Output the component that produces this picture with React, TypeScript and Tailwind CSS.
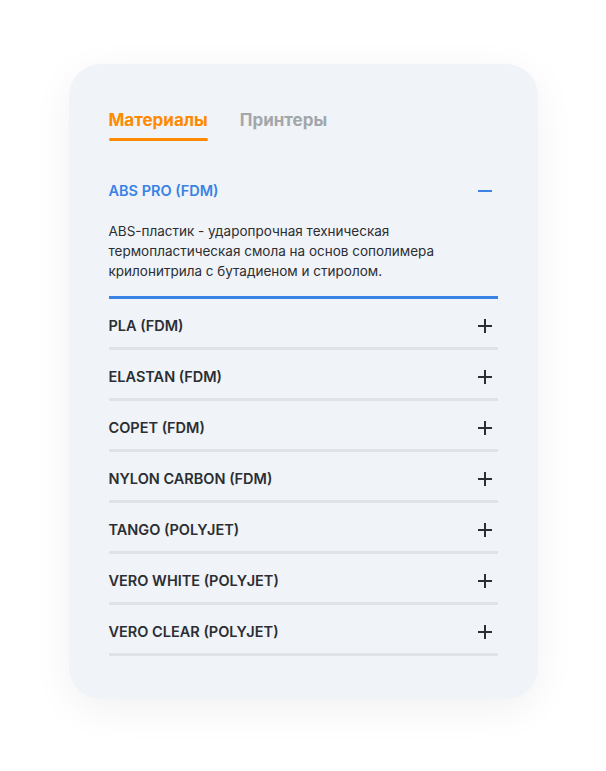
import { useState } from 'react'

const items = [
  {
    title: 'ABS PRO (FDM)',
    lines: [
      'ABS-пластик - ударопрочная техническая',
      'термопластическая смола на основ сополимера',
      'крилонитрила с бутадиеном и стиролом.',
    ],
  },
  { title: 'PLA (FDM)' },
  { title: 'ELASTAN (FDM)' },
  { title: 'COPET (FDM)' },
  { title: 'NYLON CARBON (FDM)' },
  { title: 'TANGO (POLYJET)' },
  { title: 'VERO WHITE (POLYJET)' },
  { title: 'VERO CLEAR (POLYJET)' },
]

function Plus() {
  return (
    <svg width="14" height="14" viewBox="0 0 14 14" className="text-[#2b2e33]">
      <path d="M7 0v14M0 7h14" stroke="currentColor" strokeWidth="2" />
    </svg>
  )
}

function Minus() {
  return (
    <svg width="14" height="14" viewBox="0 0 14 14" className="text-[#3a82e6]">
      <path d="M0 7h14" stroke="currentColor" strokeWidth="2" />
    </svg>
  )
}

export default function App() {
  const [tab, setTab] = useState(0)
  const [open, setOpen] = useState(0)

  return (
    <main className="flex min-h-screen w-full items-start justify-center bg-white pt-16 font-['Inter',sans-serif]">
      <div className="w-[469px] rounded-[32px] bg-[#f0f3f7] px-10 pt-11 pb-[43px] shadow-[0_10px_40px_rgba(0,0,0,0.06)]">
        <div className="flex gap-8">
          {['Материалы', 'Принтеры'].map((t, i) => (
            <button
              key={t}
              onClick={() => setTab(i)}
              className={`flex flex-col text-[17px] font-bold leading-6 ${
                i === tab ? 'text-[#ff8a00]' : 'text-[#a3a6aa]'
              }`}
            >
              {t}
              <span
                className={`mt-1.5 h-[3px] rounded-full ${i === tab ? 'bg-[#ff8a00]' : 'bg-transparent'}`}
              />
            </button>
          ))}
        </div>

        <div className="mt-[23px]">
          {items.map((item, i) => {
            const isOpen = open === i
            return (
              <div
                key={item.title}
                className={`border-b-[3px] ${isOpen ? 'border-[#3a82e6] pb-[15px]' : 'border-[#dfe2e8]'}`}
              >
                <button
                  onClick={() => setOpen(isOpen ? -1 : i)}
                  className="flex h-12 w-full items-center justify-between pt-1.5 pr-1.5 text-left"
                >
                  <span
                    className={`text-[14.5px] font-semibold leading-5 ${isOpen ? 'text-[#3a82e6]' : 'text-[#2b2e33]'}`}
                  >
                    {item.title}
                  </span>
                  {isOpen ? <Minus /> : <Plus />}
                </button>
                {isOpen && item.lines && (
                  <p className="mt-[9px] text-[13.5px] leading-5 text-[#2b2e33]">
                    {item.lines.map((l) => (
                      <span key={l} className="block">
                        {l}
                      </span>
                    ))}
                  </p>
                )}
              </div>
            )
          })}
        </div>
      </div>
    </main>
  )
}
